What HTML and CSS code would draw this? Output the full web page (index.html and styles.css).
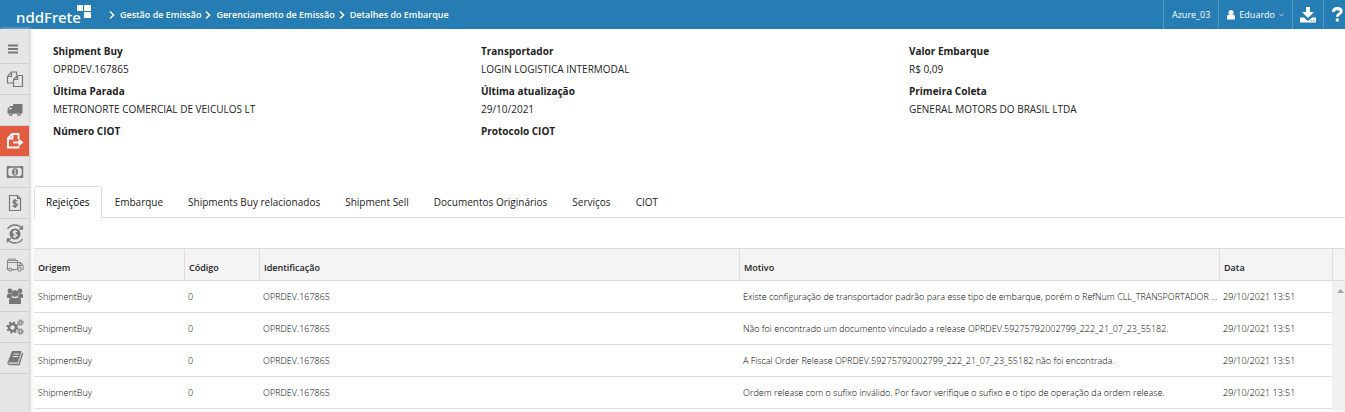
FILE: index.html
```html
<!DOCTYPE html>
<html lang="pt-BR">
<head>
    <meta charset="UTF-8">
    <meta name="viewport" content="width=device-width, initial-scale=1.0">
    <title>nddFrete - Detalhes do Embarque</title>
    <link rel="stylesheet" href="styles.css">
</head>
<body>
    <header class="topbar">
        <a class="logo" href="#">
            <span>nddFrete</span>
            <svg width="14" height="14" viewBox="0 0 14 14" fill="#fff"><path d="M0 0h6v6H0zM7 0h7v6H7zM7 7h7v6H7z"/></svg>
        </a>
        <nav class="breadcrumb">
            <a href="#"><svg width="6" height="8" viewBox="0 0 6 8"><path d="M1 0.5L4.6 4L1 7.5"/></svg>Gestão de Emissão</a>
            <a href="#"><svg width="6" height="8" viewBox="0 0 6 8"><path d="M1 0.5L4.6 4L1 7.5"/></svg>Gerenciamento de Emissão</a>
            <a href="#"><svg width="6" height="8" viewBox="0 0 6 8"><path d="M1 0.5L4.6 4L1 7.5"/></svg>Detalhes do Embarque</a>
        </nav>
        <div class="top-actions">
            <span class="top-item">Azure_03</span>
            <button class="top-item user" type="button">
                <svg width="8" height="10" viewBox="0 0 8 10" fill="#fff"><circle cx="4" cy="2.6" r="2.5"/><path d="M0 9.5V7Q0 4.6 2 4.6Q4 6 6 4.6Q8 4.6 8 7V9.5z"/></svg>
                Eduardo
                <svg width="5" height="4" viewBox="0 0 5 4" fill="none" stroke="#a9cbe2"><path d="M0.3 0.6L2.5 2.9L4.7 0.6"/></svg>
            </button>
            <button class="top-item download" type="button" aria-label="Downloads">
                <svg width="16" height="16" viewBox="0 0 16 16" fill="#fff"><path d="M6 0h4v5h4L8 11L2 5h4z"/><path d="M0 10.500h4L8 14L12 10.500H16v5H0z"/><path d="M10.500 13h1v1h-1zM13 13h1v1h-1z" fill="#267db3"/></svg>
            </button>
            <button class="top-item help" type="button" aria-label="Ajuda">
                <svg width="11" height="15" viewBox="0 0 11 15"><path d="M1.300 4.800Q1.600 1.500 5.300 1.500Q9.300 1.600 9.300 4.300Q9.300 5.900 7.200 7Q5.300 8 5.300 9.800" fill="none" stroke="#fff" stroke-width="2.800"/><path d="M3.800 11.500h3V14.500h-3z" fill="#fff"/></svg>
            </button>
        </div>
    </header>
    <div class="layout">
        <nav class="sidebar">
            <a class="menu" href="#" aria-label="Menu"><svg width="18" height="18" viewBox="0 0 18 18"><path d="M4 5.500h10M4 9h10M4 12.500h10" fill="none" stroke="#777" stroke-width="1.800"/></svg></a>
            <a href="#" aria-label="Documentos"><svg width="18" height="18" viewBox="0 0 18 18" fill="none" stroke="#777" stroke-width="1.200"><path d="M7.500 13H1.500V6.500L5.500 2H10.500V5M5.500 2V6.500H1.500"/><path d="M7.500 9.500L11.500 5.500H16.500V16.500H7.500zM11.500 5.500V9.500H7.500"/></svg></a>
            <a href="#" aria-label="Transporte"><svg width="18" height="18" viewBox="0 0 18 18" fill="#777"><path d="M7 3h9.500v9.500H7z"/><path d="M1.500 12.500V8L4 5H7.500v7.500zM2.700 8.500H5.500V6.300H4.500z" fill-rule="evenodd"/><circle cx="4.700" cy="13" r="2"/><circle cx="13" cy="13" r="2"/><circle cx="4.700" cy="13" r="0.800" fill="#e6e6e6"/><circle cx="13" cy="13" r="0.800" fill="#e6e6e6"/></svg></a>
            <a class="active" href="#" aria-label="Emissão"><svg width="18" height="18" viewBox="0 0 18 18" fill="none" stroke="#fff" stroke-width="1.800"><path d="M12.500 7V2H6L2 6V15.500H12.500V14M6.500 2V6.500H2"/><path d="M7 10.500H13"/><path d="M12.500 6.500L17.500 10.500L12.500 14.500z" fill="#fff" stroke="none"/></svg></a>
            <a href="#" aria-label="Pagamentos"><svg width="18" height="18" viewBox="0 0 18 18"><path d="M1.500 4h15v10h-15z" fill="none" stroke="#777" stroke-width="1.500"/><path d="M1 3.500h4L1 7.500zM17 3.500h-4l4 4zM1 14.500h4l-4-4zM17 14.500h-4l4-4z" fill="#777"/><ellipse cx="9" cy="9" rx="3" ry="3.700" fill="#777"/><path d="M8 7.500L9.200 6.700V11M8 11h2.400" fill="none" stroke="#e6e6e6"/></svg></a>
            <a href="#" aria-label="Faturas"><svg width="18" height="18" viewBox="0 0 18 18" fill="none" stroke="#777" stroke-width="1.200"><path d="M3.500 1.500H11.500L14.500 4.500V16.500H3.500zM11.500 1.500V4.500H14.500"/><path d="M11.300 7Q9 5.800 7.300 7Q6.300 8.800 9 9.300Q12 9.800 11 11.600Q9 13.200 6.500 11.700M9 5V14" stroke-width="1.400"/></svg></a>
            <a href="#" aria-label="Conciliação"><svg width="20" height="20" viewBox="0 0 20 20" fill="none" stroke="#777" stroke-width="1.300"><circle cx="10" cy="10" r="5.500" fill="#777" stroke="none"/><path d="M12 7.600Q10 6.500 8.600 7.600Q7.800 9.200 10 9.800Q12.700 10.400 11.700 12Q10 13.200 8 12.200M10 6v8" stroke="#e6e6e6"/><path d="M2.500 5Q5 1 10 1Q14.500 1 17 4.500M17.500 1.500V5H14M17.500 15Q15 19 10 19Q5.500 19 3 15.500M2.500 18.500V15H6"/></svg></a>
            <a href="#" aria-label="Entregas"><svg width="18" height="18" viewBox="0 0 18 18" fill="none" stroke="#888" stroke-width="1.100"><path d="M3 13.500H1.500V4.500H11.500V13.500H5.500M1.500 6.500H11.500M3 4.500V3H9V4.500M11.500 6.500H14.500L17 9.500V13.500H15.500M11.500 9.500H17M14 6.500V12M8 13.500V15"/><circle cx="4.300" cy="13.500" r="1.500"/><circle cx="13.500" cy="13.500" r="1.700"/></svg></a>
            <a href="#" aria-label="Usuários"><svg width="18" height="18" viewBox="0 0 18 18" fill="#777"><circle cx="4" cy="4" r="2.400"/><circle cx="14" cy="4" r="2.400"/><path d="M1 11V8.500Q1 6.500 3 6.500H5.500L6 10L4.500 11zM17 11V8.500Q17 6.500 15 6.500H12.500L12 10L13.500 11z"/><circle cx="9" cy="6.500" r="3.300"/><path d="M3 17V13.500Q3 10.500 6 10.500Q9 12 12 10.500Q15 10.500 15 13.500V17z"/></svg></a>
            <a href="#" aria-label="Configurações"><svg width="18" height="18" viewBox="0 0 18 18" fill="none" stroke="#777"><circle cx="6.500" cy="9.500" r="3.500" stroke-width="2.400"/><circle cx="6.500" cy="9.500" r="5.300" stroke-width="1.600" stroke-dasharray="2.080 2.080"/><circle cx="14.500" cy="4.500" r="1.700" stroke-width="1.200"/><circle cx="14.500" cy="4.500" r="2.800" stroke-dasharray="1.100 1.100"/><circle cx="14.500" cy="13.500" r="1.700" stroke-width="1.200"/><circle cx="14.500" cy="13.500" r="2.800" stroke-dasharray="1.100 1.100"/></svg></a>
            <a href="#" aria-label="Manual"><svg width="18" height="18" viewBox="0 0 18 18"><path d="M6 2H15.500L12 13.500H3.500Q1.500 13 2.500 11z" fill="#777"/><path d="M7.500 5H13M6.800 7.500H12.200" stroke="#e6e6e6"/><path d="M2.200 12.500Q1.500 15.500 4 15.500H13L16.700 4" fill="none" stroke="#777" stroke-width="1.400"/></svg></a>
        </nav>
        <main class="content">
            <dl class="details">
                <div><dt>Shipment Buy</dt><dd>OPRDEV.167865</dd></div>
                <div><dt>Transportador</dt><dd>LOGIN LOGISTICA INTERMODAL</dd></div>
                <div><dt>Valor Embarque</dt><dd>R$ 0,09</dd></div>
                <div><dt>Última Parada</dt><dd>METRONORTE COMERCIAL DE VEICULOS LT</dd></div>
                <div><dt>Última atualização</dt><dd>29/10/2021</dd></div>
                <div><dt>Primeira Coleta</dt><dd>GENERAL MOTORS DO BRASIL LTDA</dd></div>
                <div><dt>Número CIOT</dt><dd></dd></div>
                <div><dt>Protocolo CIOT</dt><dd></dd></div>
            </dl>
            <nav class="tabs">
                <a class="selected" href="#">Rejeições</a>
                <a href="#">Embarque</a>
                <a href="#">Shipments Buy relacionados</a>
                <a href="#">Shipment Sell</a>
                <a href="#">Documentos Originários</a>
                <a href="#">Serviços</a>
                <a href="#">CIOT</a>
            </nav>
            <table class="grid">
                <colgroup>
                    <col class="col-origem">
                    <col class="col-codigo">
                    <col>
                    <col>
                    <col class="col-data">
                    <col class="col-scroll">
                </colgroup>
                <thead>
                    <tr><th>Origem</th><th>Código</th><th>Identificação</th><th>Motivo</th><th>Data</th><th></th></tr>
                </thead>
                <tbody>
                    <tr>
                        <td>ShipmentBuy</td><td>0</td><td>OPRDEV.167865</td>
                        <td>Existe configuração de transportador padrão para esse tipo de embarque, porém o RefNum CLL_TRANSPORTADOR n...</td>
                        <td>29/10/2021 13:51</td>
                        <td class="scroll" rowspan="5"><svg width="7" height="4" viewBox="0 0 7 4"><path d="M3.500 0L7 4H0z" fill="#a3a3a3"/></svg></td>
                    </tr>
                    <tr>
                        <td>ShipmentBuy</td><td>0</td><td>OPRDEV.167865</td>
                        <td>Não foi encontrado um documento vinculado a release OPRDEV.59275792002799_222_21_07_23_55182.</td>
                        <td>29/10/2021 13:51</td>
                    </tr>
                    <tr>
                        <td>ShipmentBuy</td><td>0</td><td>OPRDEV.167865</td>
                        <td>A Fiscal Order Release OPRDEV.59275792002799_222_21_07_23_55182 não foi encontrada.</td>
                        <td>29/10/2021 13:51</td>
                    </tr>
                    <tr>
                        <td>ShipmentBuy</td><td>0</td><td>OPRDEV.167865</td>
                        <td>Ordem release com o sufixo inválido. Por favor verifique o sufixo e o tipo de operação da ordem release.</td>
                        <td>29/10/2021 13:51</td>
                    </tr>
                    <tr class="empty"><td colspan="5"></td></tr>
                </tbody>
            </table>
        </main>
    </div>
</body>
</html>
```
FILE: styles.css
```css
* {
    box-sizing: border-box;
}

body {
    margin: 0;
    height: 100vh;
    display: flex;
    flex-direction: column;
    overflow: hidden;
    background: #fff;
    color: #222;
    font-family: "Open Sans", "Noto Sans", sans-serif;
    font-size: 10px;
}

a {
    color: inherit;
    text-decoration: none;
}

svg {
    flex-shrink: 0;
}

/* Barra superior */
.topbar {
    display: flex;
    flex-shrink: 0;
    height: 29px;
    background: #267db3;
    color: #fff;
}

.logo {
    display: flex;
    padding: 5px 0 0 16px;
    font-family: "Noto Sans", sans-serif;
    font-size: 15px;
    font-weight: 500;
    line-height: 24px;
}

.logo svg {
    margin-left: -4px;
}

.breadcrumb {
    display: flex;
    align-items: center;
    gap: 4px;
    padding-left: 18px;
    font-size: 9px;
    font-weight: 600;
}

.breadcrumb a {
    display: flex;
    align-items: center;
    gap: 5px;
}

.breadcrumb svg {
    fill: none;
    stroke: #fff;
    stroke-width: 1.5;
}

.top-actions {
    display: flex;
    margin-left: auto;
}

.top-item {
    display: flex;
    align-items: center;
    gap: 4px;
    padding: 0 8px;
    border: 0;
    border-left: 1px solid #5199c4;
    background: none;
    color: #fff;
    font-family: inherit;
    font-size: 9px;
}

.download {
    padding: 0 7px;
}

.help {
    padding: 0 2px 0 8px;
}

/* Menu lateral */
.layout {
    display: flex;
    flex: 1;
    min-height: 0;
}

.sidebar {
    flex: 0 0 30px;
    background: #e6e6e6;
    border-right: 1px solid #d5d5d5;
    box-shadow: 1px 0 3px #ddd;
}

.sidebar a {
    display: flex;
    align-items: center;
    justify-content: center;
    height: 31px;
    border-bottom: 1px solid #cfcfcf;
}

.sidebar .menu {
    height: 35px;
    padding: 6px 3px 0 0;
}

.sidebar .active {
    background: #e35b41;
}

/* Dados do embarque */
.content {
    flex: 1;
    min-width: 0;
    padding-left: 4px;
}

.details {
    display: grid;
    grid-template-columns: repeat(3, 1fr);
    gap: 4px 0;
    margin: 0;
    padding: 13px 8px 0 19px;
    line-height: 18px;
}

.details dt {
    font-weight: 700;
}

.details dd {
    margin: 0;
    min-height: 18px;
}

/* Abas */
.tabs {
    display: flex;
    gap: 1px;
    margin-top: 28px;
    border-bottom: 1px solid #ddd;
}

.tabs a {
    padding: 0 11px;
    border: 1px solid transparent;
    border-bottom: 0;
    line-height: 30px;
}

.tabs .selected {
    margin-bottom: -1px;
    border-color: #ddd;
    border-radius: 3px 3px 0 0;
    background: #fff;
    color: #000;
}

/* Tabela de rejeições */
.grid {
    width: 100%;
    margin-top: 30px;
    border-collapse: separate;
    border-spacing: 0;
    table-layout: fixed;
    font-size: 9px;
}

.col-origem {
    width: 150px;
}

.col-codigo {
    width: 75px;
}

.col-data {
    width: 113px;
}

.col-scroll {
    width: 13px;
}

.grid th {
    height: 33px;
    padding: 6px 4px 0;
    border: solid #ddd;
    border-width: 1px 0 1px 1px;
    background: #f4f4f4;
    font-weight: 600;
    text-align: left;
}

.grid th:first-child {
    border-left: 0;
}

.grid td {
    height: 32px;
    padding: 0 0 0 4px;
    border-bottom: 1px solid #ddd;
    color: #000;
    font-weight: 300;
    overflow: hidden;
    text-overflow: ellipsis;
    white-space: nowrap;
}

.grid .empty td {
    height: 2px;
    padding: 0;
    border-bottom: 0;
}

.grid .scroll {
    padding: 7px 0 0 5px;
    border-bottom: 0;
    background: #f1f1f1;
    line-height: 4px;
    vertical-align: top;
}
```
